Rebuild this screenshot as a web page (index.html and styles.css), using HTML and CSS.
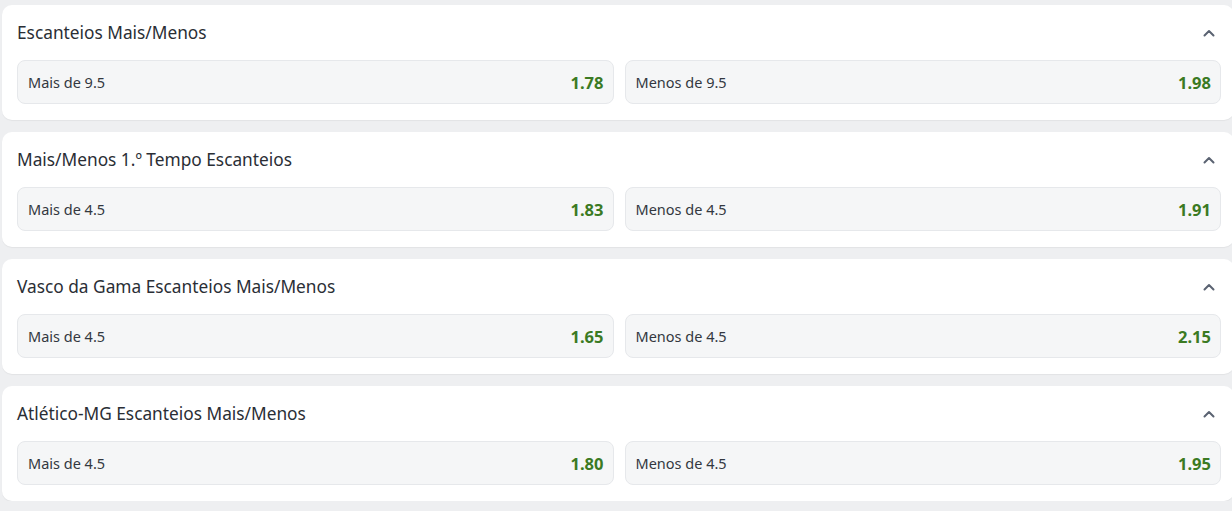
FILE: index.html
```html
<!DOCTYPE html>
<html lang="pt">
<head>
<meta charset="utf-8">
<link rel="stylesheet" href="styles.css">
</head>
<body>
<main class="list">
  <section class="market">
    <header class="market-head">
      <h2 class="market-title">Escanteios Mais/Menos</h2>
      <svg class="chev" viewBox="0 0 12 8" width="12" height="8"><path d="M1.5 6.5 L6 2 L10.5 6.5" fill="none" stroke="#5b6372" stroke-width="2" stroke-linecap="round" stroke-linejoin="round"/></svg>
    </header>
    <div class="options">
      <button class="opt"><span class="opt-label">Mais de 9.5</span><span class="opt-odd">1.78</span></button>
      <button class="opt"><span class="opt-label">Menos de 9.5</span><span class="opt-odd">1.98</span></button>
    </div>
  </section>
  <section class="market">
    <header class="market-head">
      <h2 class="market-title">Mais/Menos 1.º Tempo Escanteios</h2>
      <svg class="chev" viewBox="0 0 12 8" width="12" height="8"><path d="M1.5 6.5 L6 2 L10.5 6.5" fill="none" stroke="#5b6372" stroke-width="2" stroke-linecap="round" stroke-linejoin="round"/></svg>
    </header>
    <div class="options">
      <button class="opt"><span class="opt-label">Mais de 4.5</span><span class="opt-odd">1.83</span></button>
      <button class="opt"><span class="opt-label">Menos de 4.5</span><span class="opt-odd">1.91</span></button>
    </div>
  </section>
  <section class="market">
    <header class="market-head">
      <h2 class="market-title">Vasco da Gama Escanteios Mais/Menos</h2>
      <svg class="chev" viewBox="0 0 12 8" width="12" height="8"><path d="M1.5 6.5 L6 2 L10.5 6.5" fill="none" stroke="#5b6372" stroke-width="2" stroke-linecap="round" stroke-linejoin="round"/></svg>
    </header>
    <div class="options">
      <button class="opt"><span class="opt-label">Mais de 4.5</span><span class="opt-odd">1.65</span></button>
      <button class="opt"><span class="opt-label">Menos de 4.5</span><span class="opt-odd">2.15</span></button>
    </div>
  </section>
  <section class="market">
    <header class="market-head">
      <h2 class="market-title">Atlético-MG Escanteios Mais/Menos</h2>
      <svg class="chev" viewBox="0 0 12 8" width="12" height="8"><path d="M1.5 6.5 L6 2 L10.5 6.5" fill="none" stroke="#5b6372" stroke-width="2" stroke-linecap="round" stroke-linejoin="round"/></svg>
    </header>
    <div class="options">
      <button class="opt"><span class="opt-label">Mais de 4.5</span><span class="opt-odd">1.80</span></button>
      <button class="opt"><span class="opt-label">Menos de 4.5</span><span class="opt-odd">1.95</span></button>
    </div>
  </section>
</main>
</body>
</html>
```
FILE: styles.css
```css
html, body {
  margin: 0;
  padding: 0;
  overflow: hidden;
  background: #eeeff1;
}
body {
  font-family: "Noto Sans", "Open Sans", sans-serif;
  color: #2b2f36;
}
.list {
  display: flex;
  flex-direction: column;
  gap: 12px;
  padding: 5px 0 0 2px;
  width: 1232px;
}
.market {
  background: #ffffff;
  border-radius: 10px;
  padding: 16px 13px 16px 15px;
  box-shadow: 0 1px 1px rgba(0,0,0,0.05);
}
.market-head {
  display: flex;
  align-items: center;
  justify-content: space-between;
  height: 24px;
  margin-bottom: 15px;
}
.market-title {
  margin: 0;
  font-size: 17.3px;
  font-weight: 400;
  line-height: 24px;
  color: #2a2e35;
}
.chev {
  margin-right: 6px;
  display: block;
}
.options {
  display: grid;
  grid-template-columns: 1fr 1fr;
  gap: 11px;
}
.opt {
  display: flex;
  align-items: center;
  justify-content: space-between;
  height: 44px;
  padding: 0 9px 0 10px;
  background: #f5f6f7;
  border: 1px solid #e6e8eb;
  border-radius: 8px;
  font-family: inherit;
  cursor: pointer;
}
.opt-label {
  font-size: 14.5px;
  color: #333840;
}
.opt-odd {
  font-size: 16.5px;
  font-weight: 700;
  color: #3b7a23;
}
```
